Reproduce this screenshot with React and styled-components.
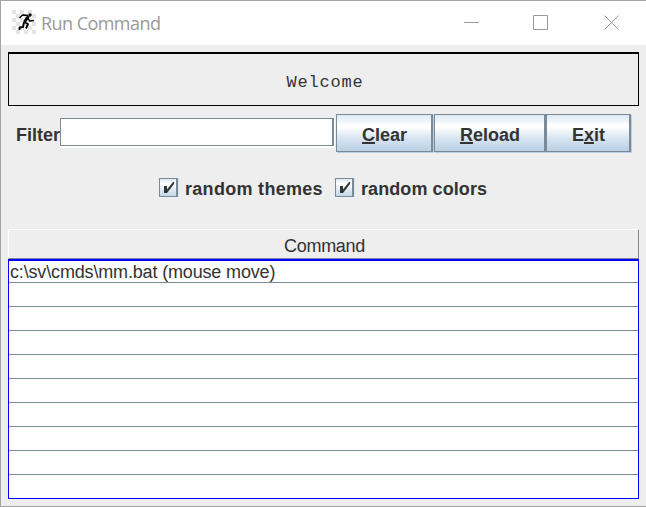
import React from 'react';
import styled, { createGlobalStyle } from 'styled-components';

const Global = createGlobalStyle`
  * { box-sizing: border-box; }
  body { margin: 0; background: #eee; overflow: hidden; }
`;

const Window = styled.div`
  width: 646px;
  height: 507px;
  display: flex;
  flex-direction: column;
  background: #eeeeee;
  border: solid #a5a5a5;
  border-width: 1px 0 1px 1px;
  color: #333;
  font: 18px/22px "Liberation Sans", Arial, sans-serif;
`;

const TitleBar = styled.header`
  flex: none;
  height: 44px;
  display: flex;
  align-items: flex-start;
  background: #fff;
  padding: 9px 0 0 11px;
`;

const Title = styled.h1`
  flex: 1;
  margin: 0 0 0 5px;
  font: 400 18px/26px "Open Sans", "Noto Sans", sans-serif;
  letter-spacing: -0.55px;
  color: #999;
`;

const Controls = styled.div`
  display: flex;
  gap: 54px;
  margin: 5px 26px 0 0;
`;

const ControlIcon = styled.svg`
  display: block;
  width: 16px;
  height: 16px;
  fill: none;
  stroke: #999;

  &:nth-child(2) {
    margin: 0 1px 0 -1px;
  }
`;

const Content = styled.main`
  width: 631px;
  margin: 7px 0 0 7px;
  display: flex;
  flex-direction: column;
`;

const Banner = styled.div`
  height: 54px;
  border: 1px solid #000;
  border-top-width: 2px;
  padding: 18px 0 0 3px;
  text-align: center;
  font: 17px/22px "Liberation Mono", "Courier New", monospace;
  letter-spacing: 0.8px;
`;

const Toolbar = styled.form`
  display: flex;
  height: 39px;
  margin: 8px 0 0 8px;
  font-weight: bold;
`;

const FilterLabel = styled.label`
  width: 44px;
  padding-top: 10px;
  white-space: nowrap;
`;

const FilterInput = styled.input`
  width: 274px;
  height: 28px;
  margin: 4px 2px 0 0;
  padding: 0 4px;
  border: 1px solid #7a8a99;
  border-right-width: 2px;
  border-radius: 0;
  outline: none;
  background: #fff;
  box-shadow: 1px 2px 0 #fff;
  font: inherit;
`;

const Button = styled.button`
  width: ${(p) => p.$width}px;
  height: 38px;
  margin-right: ${(p) => p.$gap || 0}px;
  padding: 3px 0 0 1px;
  border: 1px solid #7a8a99;
  border-right-width: 2px;
  border-radius: 0;
  box-shadow: 1px 1px 0 #b8cfe5;
  background: linear-gradient(#dde8f3 0%, #fff 30%, #fff 34%, #dde8f3 60%, #b8cfe5 100%);
  color: #333;
  font: bold 18px/22px "Liberation Sans", Arial, sans-serif;
`;

const Mnemonic = styled.span`
  display: inline-block;
  height: 20px;
  border-bottom: 2px solid #333;
`;

const Options = styled.div`
  display: flex;
  height: 22px;
  margin: 25px 0 0 151px;
  font-weight: bold;
`;

const Option = styled.label`
  display: flex;
  width: 176px;
  white-space: nowrap;
  letter-spacing: ${(p) => p.$spacing}px;
`;

const CheckBox = styled.span`
  width: 19px;
  height: 19px;
  margin-right: 7px;
  border: 1px solid #7a8a99;
  border-right-width: 2px;
  box-shadow: 1px 0 0 #dce6f0;
  background: linear-gradient(#dde8f3, #fff 30%, #dde8f3 65%, #c3d6e8);
`;

const Tick = styled.svg`
  display: block;
  width: 16px;
  height: 17px;
`;

const Table = styled.section`
  margin-top: 29px;
`;

const HeaderCell = styled.div`
  height: 30px;
  padding: 5px 0 0 2px;
  border: 1px solid #fff;
  border-right-color: #7a8a99;
  border-bottom-color: #7a8a99;
  text-align: center;
  letter-spacing: -0.3px;
`;

const Rows = styled.div`
  height: 240px;
  border: 1px solid #00f;
  border-top-width: 2px;
  background: #fff;
`;

const Row = styled.div`
  height: ${(p) => (p.$first ? 22 : 24)}px;
  padding-left: 1px;
  border-bottom: 1px solid #7a8a99;
  line-height: 22px;
  letter-spacing: -0.16px;

  &:last-child {
    height: 23px;
    border-bottom: 0;
  }
`;

const RunnerIcon = () => (
  <svg width="24" height="24" viewBox="0 0 24 24">
    <defs>
      <pattern id="squares" width="8" height="8" patternUnits="userSpaceOnUse">
        <path d="M0 0h4v4H0zM4 4h4v4H4z" fill="#e4e4e4" />
      </pattern>
    </defs>
    <rect width="24" height="24" fill="url(#squares)" />
    <g fill="none" stroke="#000" strokeLinejoin="round">
      <path d="M16.500 6L12.500 12" strokeWidth="3" />
      <path d="M16 5.500L10.500 5L7.500 8" strokeWidth="1.500" />
      <path d="M16 8L17.500 11L22 10.500" strokeWidth="1.500" />
      <path d="M12 12L16 14L14 18.500" strokeWidth="1.900" />
      <path d="M12 12L11 17L7.500 17.500V20" strokeWidth="1.900" />
    </g>
    <circle cx="18" cy="5" r="1.700" />
  </svg>
);

const options = [
  { name: 'random themes', spacing: 0.3 },
  { name: 'random colors', spacing: 0.08 },
];
const commands = ['c:\\sv\\cmds\\mm.bat (mouse move)', '', '', '', '', '', '', '', '', ''];

export default function App() {
  return (
    <Window>
      <Global />
      <TitleBar>
        <RunnerIcon />
        <Title>Run Command</Title>
        <Controls>
          <ControlIcon><path d="M0 7.500h15" /></ControlIcon>
          <ControlIcon><path d="M.5.5h14v14H.5z" /></ControlIcon>
          <ControlIcon><path d="M.5.5l14 14M14.500.5l-14 14" /></ControlIcon>
        </Controls>
      </TitleBar>
      <Content>
        <Banner>Welcome</Banner>
        <Toolbar onSubmit={(e) => e.preventDefault()}>
          <FilterLabel htmlFor="filter">Filter</FilterLabel>
          <FilterInput id="filter" />
          <Button type="button" $width={97} $gap={1}><Mnemonic>C</Mnemonic>lear</Button>
          <Button type="button" $width={112}><Mnemonic>R</Mnemonic>eload</Button>
          <Button type="button" $width={85}>E<Mnemonic>x</Mnemonic>it</Button>
        </Toolbar>
        <Options>
          {options.map(({ name, spacing }) => (
            <Option key={name} $spacing={spacing}>
              <CheckBox>
                <Tick viewBox="0 0 16 17">
                  <path d="M4 7h3v3.500L13 3h1v2L7 14H4z" fill="#333" />
                </Tick>
              </CheckBox>
              {name}
            </Option>
          ))}
        </Options>
        <Table>
          <HeaderCell>Command</HeaderCell>
          <Rows>
            {commands.map((command, i) => (
              <Row key={i} $first={i === 0}>{command}</Row>
            ))}
          </Rows>
        </Table>
      </Content>
    </Window>
  );
}
